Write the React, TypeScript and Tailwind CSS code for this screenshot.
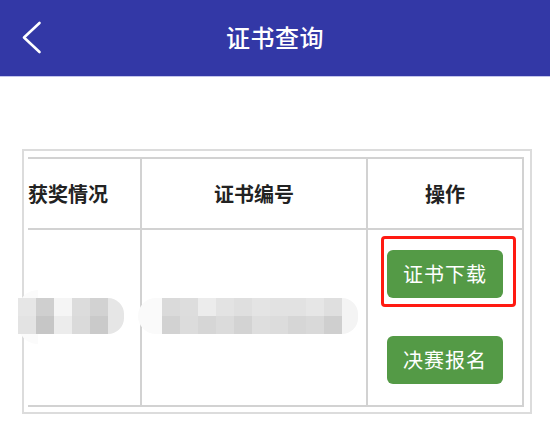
import React from 'react';

const font = { fontFamily: '"Noto Sans CJK SC", "Noto Sans", sans-serif' };

const mosaicA = [
  ['#e6e6e6', '#cfcfcf', '#f5f5f5', '#dcdcdc', '#d2d2d2'],
  ['#e3e3e3', '#c6c6c6', '#ececec', '#dadada', '#cacaca'],
];

const mosaicB = [
  ['#dadada', '#dddddd', '#ececec', '#e3e3e3', '#dfdfdf', '#e4e4e4', '#e2e2e2', '#e2e2e2', '#e6e6e6', '#dfdfdf'],
  ['#d2d2d2', '#dcdcdc', '#d6d6d6', '#dbdbdb', '#d3d3d3', '#dedede', '#dcdcdc', '#d6d6d6', '#d9d9d9', '#cfcfcf'],
];

function Mosaic({ rows, tail }: { rows: string[][]; tail: string }) {
  return (
    <div className="flex items-center">
      <div className="flex flex-col">
        {rows.map((row, r) => (
          <div key={r} className="flex">
            {row.map((c, i) => (
              <div key={i} className="w-[18px] h-[18px]" style={{ backgroundColor: c }} />
            ))}
          </div>
        ))}
      </div>
      <div className="w-[16px] h-[36px] rounded-r-full" style={{ backgroundColor: tail }} />
    </div>
  );
}

export default function App() {
  return (
    <div className="w-[550px] h-[444px] bg-white relative overflow-hidden" style={font}>
      <header className="h-[77px] bg-[#3338a6] border-b border-[#c3c5ec] flex items-center justify-center relative">
        <svg className="absolute left-[20px] top-[20px]" width="24" height="36" viewBox="0 0 24 36">
          <path d="M19.5 3 L4 17.5 L19.5 32" fill="none" stroke="#fff" strokeWidth="2.6" strokeLinecap="round" strokeLinejoin="round" />
        </svg>
        <h1 className="text-white text-[24px] font-medium tracking-[0.5px] -mt-[3px]">证书查询</h1>
      </header>

      <div className="mt-[72px] ml-[22px] w-[510px] h-[265px] border-2 border-[#dcdcdc] pt-[6px] pr-[6px] pl-[4px] overflow-hidden">
        <div className="grid grid-cols-[112px_226px_156px] grid-rows-[69px_177px] border-t-2 border-b-2 border-r-2 border-[#d2d2d2] w-[496px] h-[250px]">
          <div className="flex items-center text-[20px] font-bold text-[#222] whitespace-nowrap">获奖情况</div>
          <div className="flex items-center justify-center border-l-2 border-[#d2d2d2] text-[20px] font-bold text-[#222]">证书编号</div>
          <div className="flex items-center justify-center border-l-2 border-[#d2d2d2] text-[20px] font-bold text-[#222]">操作</div>

          <div className="border-t-2 border-[#d2d2d2]" />
          <div className="border-t-2 border-l-2 border-[#d2d2d2]" />
          <div className="border-t-2 border-l-2 border-[#d2d2d2] flex flex-col items-center pt-[20px] gap-[38px]">
            <div className="relative">
              <div className="absolute -left-[6px] -top-[14px] w-[135px] h-[71px] border-[3px] border-[#ff1a12] rounded-[4px]" />
              <button className="w-[116px] h-[48px] rounded-[6px] bg-[#549a46] text-white text-[20px] tracking-[1px]">证书下载</button>
            </div>
            <button className="w-[116px] h-[48px] rounded-[6px] bg-[#549a46] text-white text-[20px] tracking-[1px]">决赛报名</button>
          </div>
        </div>
      </div>

      <div className="absolute left-[18px] top-[290px] w-[20px] h-[54px] rounded-l-full bg-[#fbfbfb]" />
      <div className="absolute left-[18px] top-[298px]">
        <Mosaic rows={mosaicA} tail="#e6e6e6" />
      </div>
      <div className="absolute left-[138px] top-[298px] w-[24px] h-[36px] rounded-l-full bg-[#fafafa]" />
      <div className="absolute left-[162px] top-[298px]">
        <Mosaic rows={mosaicB} tail="#f4f4f4" />
      </div>
    </div>
  );
}
